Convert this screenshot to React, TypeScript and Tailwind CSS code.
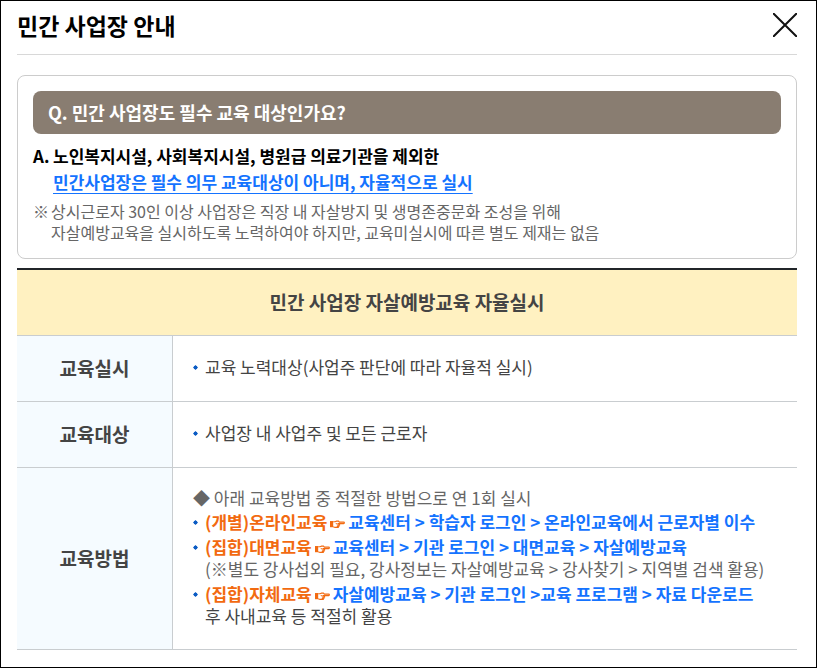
import type { ReactNode } from "react";

function Bullet() {
  return (
    <svg
      aria-hidden="true"
      viewBox="0 0 5 5"
      fill="#0b5cc4"
      className="mt-[9px] size-[5px] shrink-0"
    >
      <path d="M2.5 0 5 2.5 2.5 5 0 2.5z" />
      <path d="M1 1h3v3H1z" />
    </svg>
  );
}

function BulletItem({ children }: { children: ReactNode }) {
  return (
    <li className="flex gap-[7px]">
      <Bullet />
      <div>{children}</div>
    </li>
  );
}

function PointingHand() {
  return (
    <svg
      aria-hidden="true"
      viewBox="0 0 16 9"
      className="mx-[3px] inline-block h-[9px] w-[15px] align-baseline"
      fill="none"
      stroke="currentColor"
      strokeWidth="1.2"
    >
      <path d="M0 .8h3.4v6.6H0z" fill="currentColor" stroke="none" />
      <path d="M3.4 1.6h2L7 .9h2L10 2h4.6c1 0 1 1.5 0 1.5H8.4" />
      <path d="M8 3.5h2.2V5H7.6M9.6 5v1.4H7.2M8.8 6.4v1.2H5.4L3.4 6.8" />
      <path d="M5.6 3.8 7.4 3v1.6z" fill="currentColor" stroke="none" />
    </svg>
  );
}

const methods = [
  {
    label: "(개별)온라인교육",
    path: "교육센터 > 학습자 로그인 > 온라인교육에서 근로자별 이수",
  },
  {
    label: "(집합)대면교육",
    path: "교육센터 > 기관 로그인 > 대면교육 > 자살예방교육",
    note: "(※별도 강사섭외 필요, 강사정보는 자살예방교육 > 강사찾기 > 지역별 검색 활용)",
    noteClass: "text-[#666666]",
  },
  {
    label: "(집합)자체교육",
    path: "자살예방교육 > 기관 로그인 >교육 프로그램 > 자료 다운로드",
    note: "후 사내교육 등 적절히 활용",
    noteClass: "text-[#444444]",
  },
];

const thClass =
  "w-[156px] border-r border-b border-[#c9cdd0] bg-[#f5fbff] text-center text-[19px] font-bold text-[#444444]";
const tdClass = "border-b border-[#c9cdd0] px-5 pb-1 text-[17px] leading-[22px] text-[#444444]";

export default function App() {
  return (
    <div
      role="dialog"
      aria-labelledby="guide-title"
      className="min-h-screen border border-black bg-white pr-[19px] pb-4 pl-4 font-['Noto_Sans_CJK_KR',sans-serif]"
    >
      <header className="flex h-[54px] items-center justify-between border-b border-[#d8d8d8] pb-1.5">
        <h1 id="guide-title" className="text-[23px] leading-8 font-bold text-black">
          민간 사업장 안내
        </h1>
        <button type="button" aria-label="닫기" className="size-6">
          <svg viewBox="0 0 24 24" className="size-6" stroke="#111111" strokeWidth="2">
            <path d="M0 0 24 24M24 0 0 24" />
          </svg>
        </button>
      </header>

      <section className="mt-5 rounded-[8px] border border-[#cccccc] p-[15px]">
        <h2 className="rounded-[8px] bg-[#897d71] px-[15px] py-2.5 text-[18px] leading-[23px] font-bold text-white">
          Q. 민간 사업장도 필수 교육 대상인가요?
        </h2>
        <div className="mt-[9px] flex gap-1 text-[17px] leading-[26px] font-bold text-black">
          <span className="w-4 shrink-0">A.</span>
          <div>
            <p>노인복지시설, 사회복지시설, 병원급 의료기관을 제외한</p>
            <p className="text-[#1473ff] underline decoration-1 underline-offset-4">
              민간사업장은 필수 의무 교육대상이 아니며, 자율적으로 실시
            </p>
          </div>
        </div>
        <div className="mt-1.5 flex gap-0.5 text-[16px] leading-[21px] text-[#666666]">
          <span className="w-4 shrink-0">※</span>
          <div>
            <p>상시근로자 30인 이상 사업장은 직장 내 자살방지 및 생명존중문화 조성을 위해</p>
            <p>자살예방교육을 실시하도록 노력하여야 하지만, 교육미실시에 따른 별도 제재는 없음</p>
          </div>
        </div>
      </section>

      <table className="mt-[9px] w-full border-separate border-spacing-0 border-t-2 border-[#212529]">
        <thead>
          <tr>
            <th
              colSpan={2}
              scope="colgroup"
              className="h-[66px] border-b border-[#c9cdd0] bg-[#fff1c1] text-[19px] font-bold text-[#444444]"
            >
              민간 사업장 자살예방교육 자율실시
            </th>
          </tr>
        </thead>
        <tbody>
          <tr className="h-[66px]">
            <th scope="row" className={thClass}>
              교육실시
            </th>
            <td className={tdClass}>
              <ul>
                <BulletItem>교육 노력대상(사업주 판단에 따라 자율적 실시)</BulletItem>
              </ul>
            </td>
          </tr>
          <tr className="h-[66px]">
            <th scope="row" className={thClass}>
              교육대상
            </th>
            <td className={tdClass}>
              <ul>
                <BulletItem>사업장 내 사업주 및 모든 근로자</BulletItem>
              </ul>
            </td>
          </tr>
          <tr className="h-[182px]">
            <th scope="row" className={thClass}>
              교육방법
            </th>
            <td className={tdClass}>
              <p className="text-[#666666]">◆ 아래 교육방법 중 적절한 방법으로 연 1회 실시</p>
              <ul className="mt-0.5 space-y-[3px]">
                {methods.map((method) => (
                  <BulletItem key={method.label}>
                    <p className="font-bold text-[#1473ff]">
                      <span className="text-[#f26a10]">
                        {method.label}
                        <PointingHand />
                      </span>
                      {method.path}
                    </p>
                    {method.note && <p className={method.noteClass}>{method.note}</p>}
                  </BulletItem>
                ))}
              </ul>
            </td>
          </tr>
        </tbody>
      </table>
    </div>
  );
}
